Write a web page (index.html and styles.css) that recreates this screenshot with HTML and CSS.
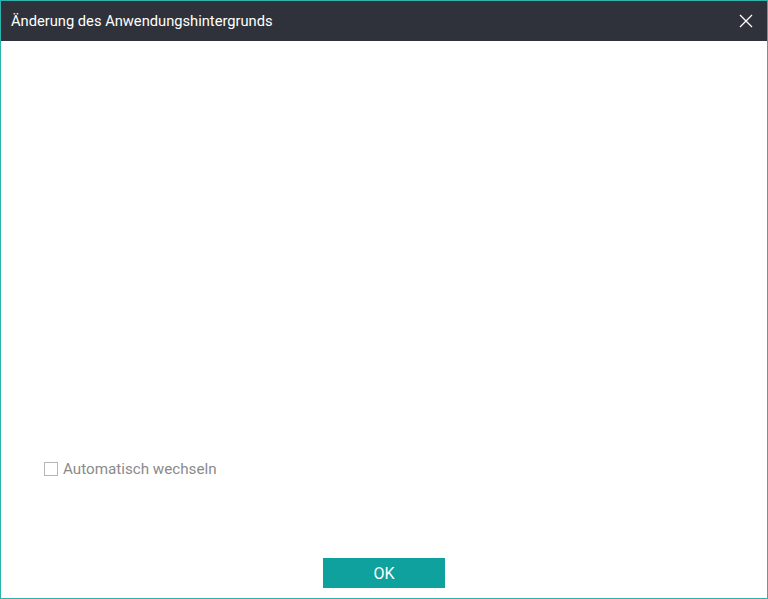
FILE: index.html
```html
<!DOCTYPE html>
<html>
<head>
	<title>Hintergrund</title>
	<link rel="stylesheet" href="styles.css">
</head>
<body>
   <div class="dialog">
      <div class="titlebar">
         <span class="title">Änderung des Anwendungshintergrunds</span>
         <span class="close">
            <svg width="14" height="14" viewBox="0 0 14 14"><path d="M1 1L13 13M13 1L1 13" stroke="#fff" stroke-width="1.3" fill="none"/></svg>
         </span>
      </div>
      <div class="content">
         <label class="auto"><span class="box"></span>Automatisch wechseln</label>
      </div>
      <div class="footer">
         <div class="ok">OK</div>
      </div>
   </div>
</body>
</html>
```

FILE: styles.css
```css
html,body{
	margin: 0;
	padding: 0;
}
body{
	font-family: Roboto, "Liberation Sans", sans-serif;
	background: #fff;
}
.dialog{
	width: 768px;
	height: 599px;
	box-sizing: border-box;
	border: 1px solid #2db3ad;
	display: flex;
	flex-direction: column;
}
.titlebar{
	height: 40px;
	background: #2f323a;
	display: flex;
	align-items: center;
	justify-content: space-between;
	padding: 0 14px 0 10px;
	flex-shrink: 0;
}
.title{
	color: #fff;
	font-size: 14.7px;
}
.close{
	display: flex;
	align-items: center;
}
.content{
	flex: 1;
	display: flex;
	flex-direction: column;
	justify-content: flex-end;
	padding: 0 0 0 43px;
}
.auto{
	display: flex;
	align-items: center;
	color: #8a8a8a;
	font-size: 15.2px;
	margin-bottom: 80px;
}
.box{
	width: 12px;
	height: 12px;
	border: 1px solid #b5b5b5;
	margin-right: 5px;
}
.footer{
	display: flex;
	justify-content: center;
	padding-bottom: 10px;
}
.ok{
	width: 122px;
	height: 30px;
	background: #0fa19d;
	color: #fff;
	font-size: 16px;
	display: flex;
	align-items: center;
	justify-content: center;
}
```
